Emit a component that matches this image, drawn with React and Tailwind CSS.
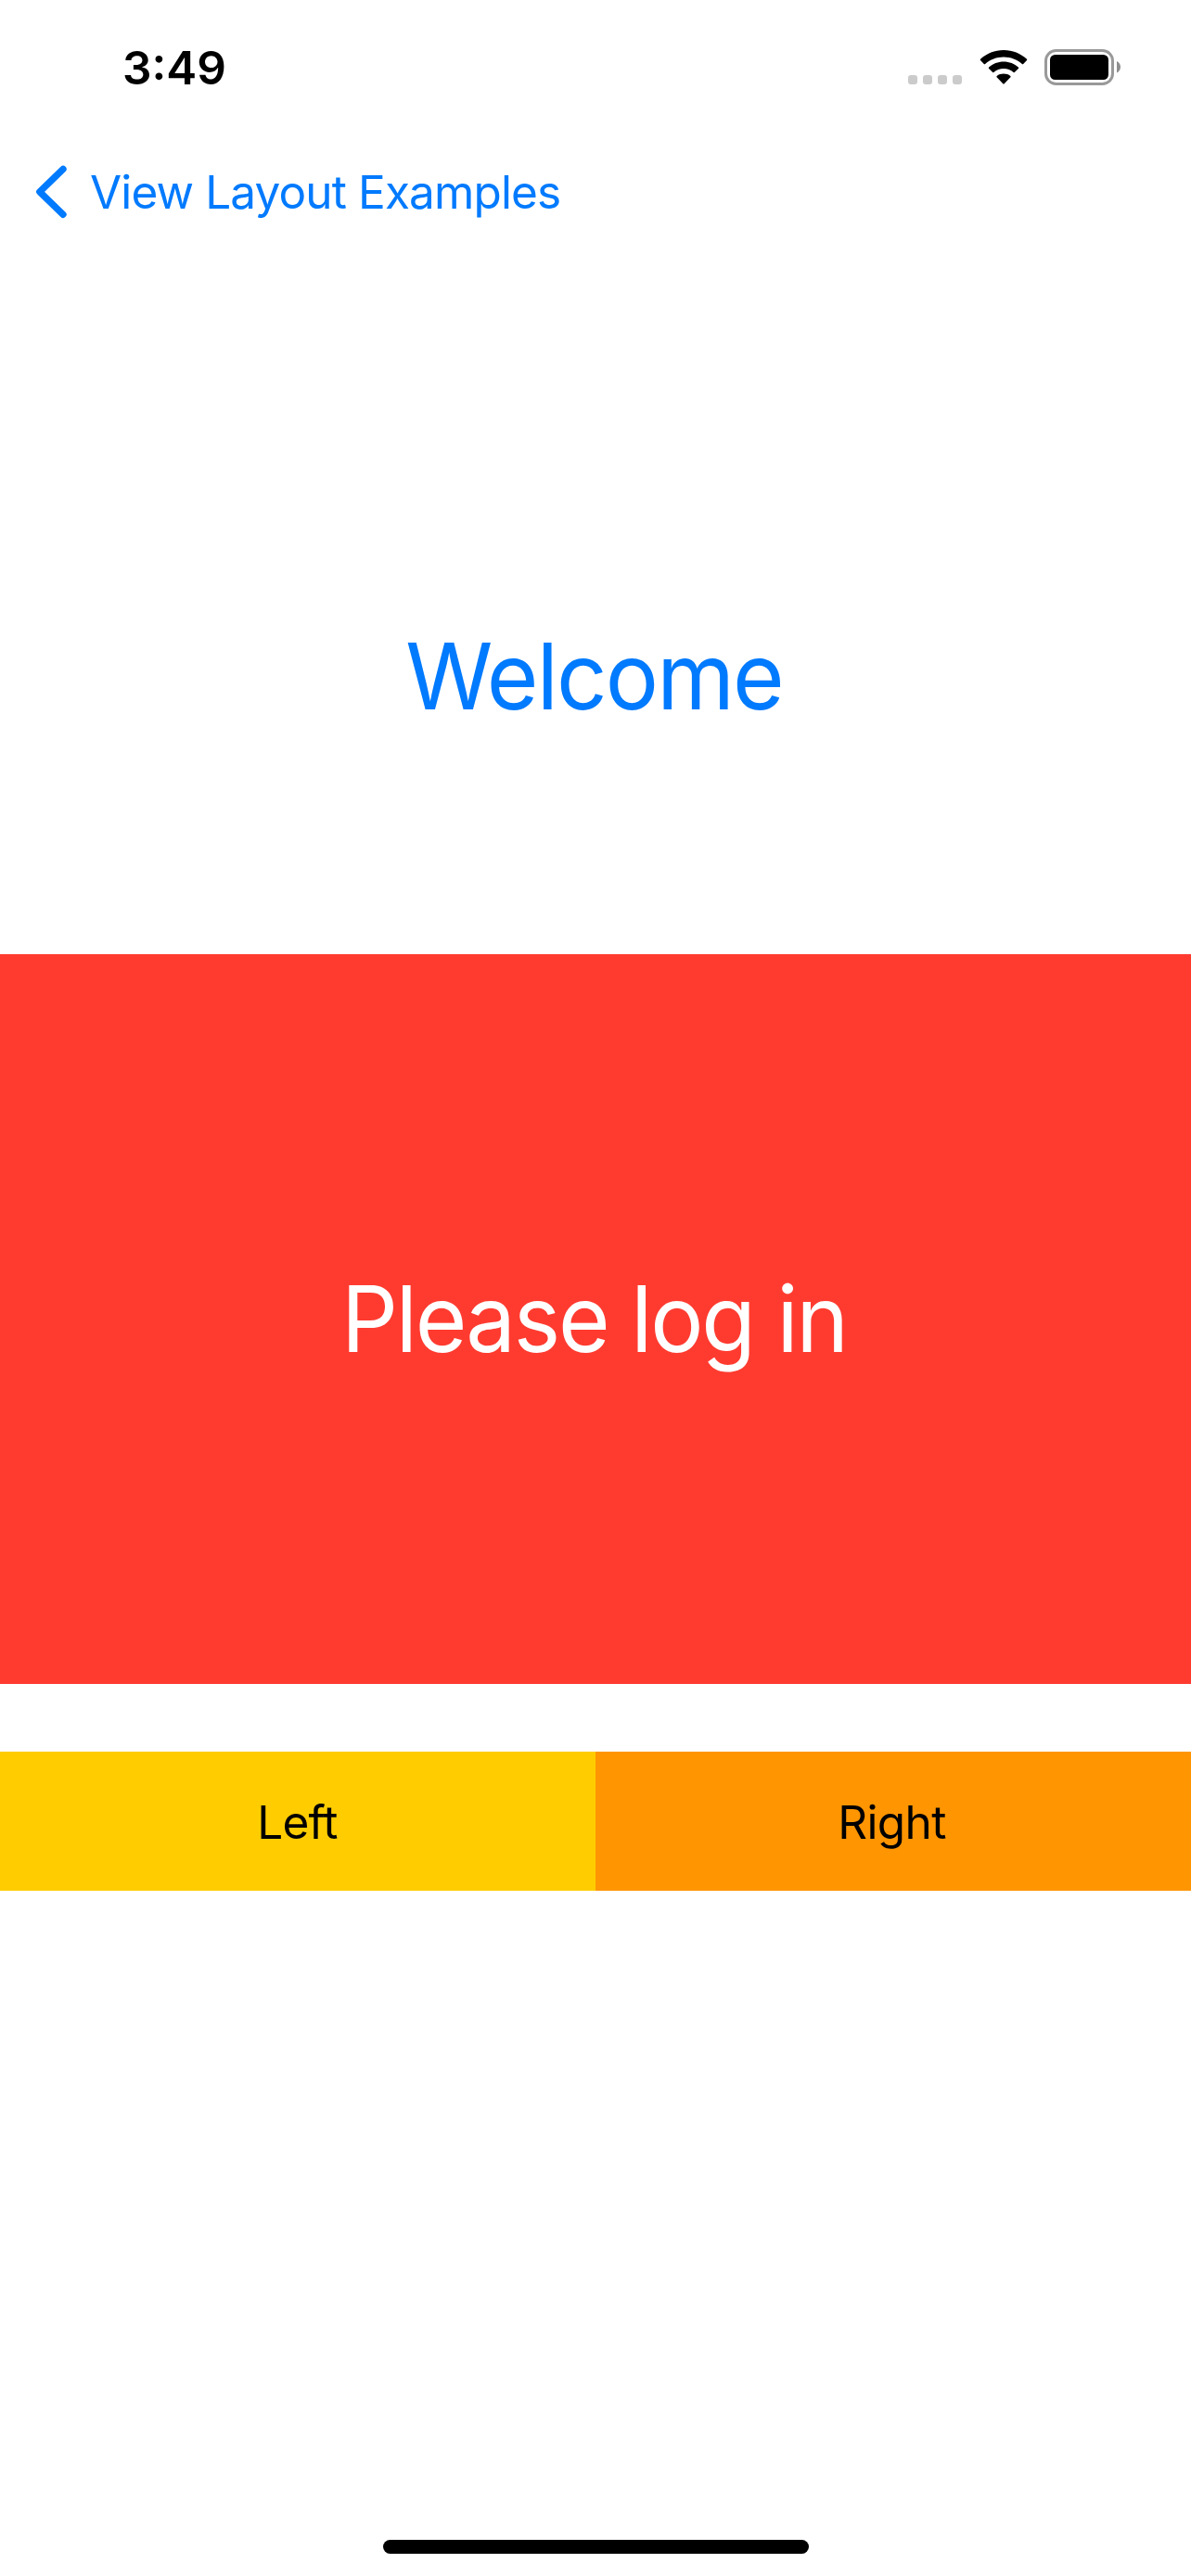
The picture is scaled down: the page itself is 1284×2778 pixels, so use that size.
function CellularDots() {
  return (
    <div className="flex gap-[6px] self-start pt-[28px]">
      {[0, 1, 2, 3].map((i) => (
        <span key={i} className="size-[10px] rounded-[3px] bg-[#cbcbcb]" />
      ))}
    </div>
  );
}

function WifiIcon() {
  return (
    <svg width="52" height="38" viewBox="0 0 52 38" className="ml-[18.5px] mt-px" aria-hidden="true">
      <path d="M26 0C35.5 0 44.4 3.6 51 9.8q.6.6 0 1.3L47.2 15q-.6.6-1.3 0C40.5 10.2 33.5 7.5 26 7.5S11.5 10.2 6.1 15q-.7.6-1.3 0L1 11.1q-.6-.7 0-1.3C7.6 3.6 16.5 0 26 0Z" />
      <path d="M26 12.6c6.100 0 11.700 2.300 15.900 6q.7.6 0 1.300L38 23.800q-.6.6-1.300.1A16.300 16.300 0 0 0 26 20c-4.100 0-7.800 1.500-10.700 3.900q-.7.500-1.300-.1L10.100 19.900q-.7-.7 0-1.300C14.300 14.900 19.900 12.600 26 12.600Z" />
      <path d="M26 25.600c2.800 0 5.300.8 7.300 2.300q.8.7.1 1.400l-6.700 7q-.7.700-1.400 0L18.600 29.300q-.7-.7.1-1.400C20.700 26.400 23.200 25.600 26 25.600Z" />
    </svg>
  );
}

function BatteryIcon() {
  return (
    <svg width="84" height="39" viewBox="0 0 84 39" className="ml-[18.5px]" aria-hidden="true">
      <rect x="1.500" y="1.500" width="72" height="36" rx="11" fill="none" stroke="#999" strokeWidth="3" />
      <rect x="6" y="6" width="63" height="27" rx="5.500" />
      <path d="M78 13c2.400 1 4 3.500 4 6.300s-1.600 5.300-4 6.300Z" fill="#8e8e8e" />
    </svg>
  );
}

export default function App() {
  return (
    <div className="flex h-[2778px] w-[1284px] flex-col overflow-hidden bg-white font-['Inter',sans-serif] text-[49.5px] text-black">
      <header className="flex h-[146px] items-center justify-between pl-[132px] pr-[74px]">
        <time className="pt-[2px] font-semibold leading-none">3:49</time>
        <div className="flex h-[40px] items-start">
          <CellularDots />
          <WifiIcon />
          <BatteryIcon />
        </div>
      </header>

      <nav className="flex h-[122px] items-center pl-[36px] text-[#007aff]">
        <svg width="40" height="62" viewBox="0 0 40 62" fill="none" stroke="currentColor" strokeWidth="7.300" strokeLinecap="round" strokeLinejoin="round" aria-hidden="true">
          <path d="M32 6.300L6.800 30.800 32 55.300" />
        </svg>
        <a className="ml-[21px] whitespace-nowrap pt-[2px] leading-none tracking-[-0.87px]">View Layout Examples</a>
      </nav>

      <main className="flex flex-col">
        <section className="flex h-[761px] items-center justify-center pr-[2px] pt-[161px] text-[99px] leading-none tracking-[-1.9px] text-[#007aff]">
          <h1 className="scale-x-[0.965]">Welcome</h1>
        </section>
        <section className="flex h-[787px] items-center justify-center bg-[#ff3b30] pr-[3px] text-[99px] leading-none tracking-[-2.24px] text-white">
          <p className="scale-x-[0.965]">Please log in</p>
        </section>
        <section className="mt-[73px] grid h-[150px] grid-cols-2 leading-none">
          <div className="flex items-center justify-center bg-[#ffcc00] pr-px pt-[3px] tracking-[-0.83px]">Left</div>
          <div className="flex items-center justify-center bg-[#ff9500] pr-[3px] pt-[3px] tracking-[-0.62px]">Right</div>
        </section>
      </main>

      <footer className="mt-auto flex justify-center pb-[24px]">
        <div className="h-[15px] w-[459px] rounded-full bg-black" />
      </footer>
    </div>
  );
}
